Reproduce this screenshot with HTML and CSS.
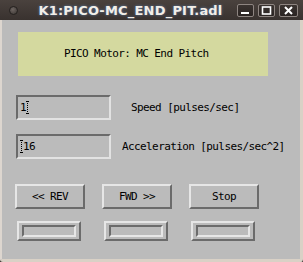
FILE: index.html
```html
<!DOCTYPE html>
<html lang="en">
<head>
	<meta charset="UTF-8">
	<title>K1:PICO-MC_END_PIT.adl</title>
	<link rel="stylesheet" href="styles.css">
</head>
<body>
	<div class="window">
		<!-- 标题栏 -->
		<div class="titlebar">
			<span class="menu-dot"></span>
			<span class="title">K1:PICO-MC_END_PIT.adl</span>
			<span class="wbtn"><svg width="11" height="9" viewBox="0 0 11 9"><rect x="1" y="6" width="8" height="2" fill="#fff"/></svg></span>
			<span class="wbtn"><svg width="11" height="9" viewBox="0 0 11 9"><rect x="1.5" y="1" width="8" height="7" fill="none" stroke="#fff" stroke-width="1.6"/></svg></span>
			<span class="wbtn"><svg width="11" height="9" viewBox="0 0 11 9"><path d="M2 1 L9 8 M9 1 L2 8" stroke="#fff" stroke-width="2"/></svg></span>
		</div>

		<div class="content">
			<div class="banner">PICO Motor: MC End Pitch</div>

			<div class="row">
				<div class="field">1<span class="caret"></span></div>
				<span class="label label-speed">Speed [pulses/sec]</span>
			</div>
			<div class="row row-accel">
				<div class="field"><span class="caret"></span>16</div>
				<span class="label label-accel">Acceleration [pulses/sec^2]</span>
			</div>

			<div class="buttons">
				<button class="btn">&lt;&lt; REV</button>
				<button class="btn">FWD &gt;&gt;</button>
				<button class="btn">Stop</button>
			</div>

			<div class="leds">
				<div class="led"><div class="led-in"></div></div>
				<div class="led"><div class="led-in"></div></div>
				<div class="led"><div class="led-in"></div></div>
			</div>
		</div>
	</div>
</body>
</html>
```

FILE: styles.css
```css
html, body {
	margin: 0;
	padding: 0;
	background: #3a3330;
}
.window {
	width: 303px;
	height: 262px;
	display: flex;
	flex-direction: column;
	overflow: hidden;
}

/* 标题栏 */
.titlebar {
	height: 20px;
	flex: none;
	display: flex;
	align-items: center;
	background: linear-gradient(#4a423e, #39322f);
	font-family: "DejaVu Sans", sans-serif;
}
.menu-dot {
	width: 9px;
	height: 9px;
	margin-left: 9px;
	margin-right: 6px;
	border-radius: 50%;
	border: 1px solid #24201e;
	background: radial-gradient(circle at 40% 35%, #6e6662, #3a3431);
	box-sizing: border-box;
}
.title {
	flex: 1;
	text-align: center;
	color: #f2eee8;
	font-size: 13px;
	font-weight: bold;
	letter-spacing: 0.2px;
	text-shadow: 0 0 3px #5b7ca8;
}
.wbtn {
	width: 17px;
	height: 13px;
	box-sizing: border-box;
	margin-right: 4px;
	border: 1px solid #8e8581;
	border-radius: 2px;
	background: linear-gradient(#3a3330, #2a2422);
	display: flex;
	align-items: center;
	justify-content: center;
}
.wbtn:last-child {
	width: 19px;
	margin-right: 5px;
}

/* 内容区 */
.content {
	flex: 1;
	background: #bbbbbb;
	border-left: 2px solid #ddd6cf;
	border-right: 3px solid #d9d1c6;
	border-bottom: 3px solid #d9d1c6;
	border-radius: 0 0 3px 3px;
	font-family: "DejaVu Sans Mono", monospace;
	font-size: 11px;
	letter-spacing: -0.6px;
	color: #000;
}
.banner {
	width: 250px;
	height: 44px;
	margin: 12px 0 0 16px;
	background: #d4d99f;
	box-sizing: border-box;
	padding-left: 46px;
	line-height: 44px;
}

.row {
	display: flex;
	align-items: center;
	margin: 19px 0 0 14px;
}
.row-accel {
	margin-top: 14px;
}
.field {
	width: 95px;
	height: 25px;
	box-sizing: border-box;
	border-style: solid;
	border-width: 2px;
	border-color: #6b6b6b #e2e2e2 #e2e2e2 #6b6b6b;
	padding-left: 2px;
	display: flex;
	align-items: center;
}
.caret {
	display: inline-block;
	width: 1px;
	height: 13px;
	margin: 0 1px;
	background: repeating-linear-gradient(#000 0 1px, transparent 1px 2px);
	position: relative;
}
.caret::before, .caret::after {
	content: '';
	position: absolute;
	left: -1px;
	width: 3px;
	height: 1px;
	background: #000;
}
.caret::before { top: 0; }
.caret::after { bottom: 0; }
.label-speed {
	margin-left: 20px;
}
.label-accel {
	margin-left: 11px;
}

.buttons {
	display: flex;
	gap: 17px;
	margin: 25px 0 0 13px;
}
.btn {
	width: 70px;
	height: 25px;
	box-sizing: border-box;
	border-style: solid;
	border-width: 2px;
	border-color: #e6e6e6 #6b6b6b #6b6b6b #e6e6e6;
	background: #bbbbbb;
	font-family: "DejaVu Sans Mono", monospace;
	font-size: 11px;
	letter-spacing: -0.6px;
	color: #000;
	padding: 0;
}

.leds {
	display: flex;
	gap: 23px;
	margin: 12px 0 0 15px;
}
.led {
	width: 64px;
	height: 20px;
	box-sizing: border-box;
	border-style: solid;
	border-width: 2px;
	border-color: #e6e6e6 #6b6b6b #6b6b6b #e6e6e6;
	padding: 2px 3px;
}
.led-in {
	height: 100%;
	box-sizing: border-box;
	border-style: solid;
	border-width: 2px;
	border-color: #6b6b6b #e6e6e6 #e6e6e6 #6b6b6b;
}
```
